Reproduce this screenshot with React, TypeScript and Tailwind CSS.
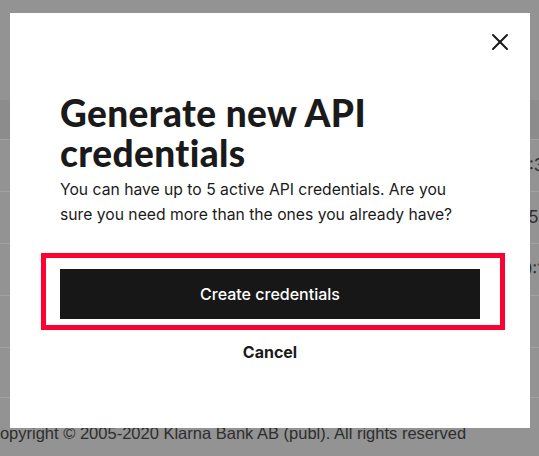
import React from 'react';
import { X } from 'lucide-react';

const rows = [
  { id: 1, value: '14:32:08' },
  { id: 2, value: '125.00' },
  { id: 3, value: '09:14:51' },
  { id: 4, value: '' },
];

const App: React.FC = () => {
  return (
    <div className="relative w-[539px] h-[456px] overflow-hidden bg-[#939393] font-['Inter',sans-serif] text-[#1a1a1a]">
      {/* Page behind the overlay */}
      <div className="flex flex-col h-full">
        <div className="h-[100px]" />
        <div className="h-[40px] bg-[#8c8c8c] border-b border-[#a2a2a2]" />
        {rows.map((row) => (
          <div key={row.id} className="h-[52px] border-b border-[#a2a2a2] flex items-center pl-[511px] text-[17px] text-[#2e2e2e] whitespace-nowrap">
            {row.value}
          </div>
        ))}
        <div className="h-[49px]" />
        <div className="border-t border-[#a2a2a2] flex-1 pt-[23px] -ml-[12px] text-[16.5px] text-[#2e2e2e] whitespace-nowrap font-['Liberation_Sans',sans-serif]">
          Copyright © 2005-2020 Klarna Bank AB (publ). All rights reserved
        </div>
      </div>

      {/* Modal */}
      <div className="absolute left-[10px] top-[13px] w-[520px] h-[415px] bg-white flex flex-col">
        <div className="flex justify-end pt-[15px] pr-[16px]">
          <X size={28} strokeWidth={1.7} className="text-[#1a1a1a]" />
        </div>
        <div className="px-[50px] mt-[37px]">
          <h2 className="font-['Lato',sans-serif] font-black text-[37px] leading-[40px] tracking-[0.4px]">
            Generate new API credentials
          </h2>
          <p className="mt-[4px] text-[15.7px] leading-[25px] text-[#1a1a1a]">
            You can have up to 5 active API credentials. Are you sure you need more than the ones you already have?
          </p>
        </div>
        <div className="ml-[31px] mr-[25px] mt-[26px] border-[5px] border-[#ff0033] pt-[11px] pl-[14px] pr-[20px] pb-[6px]">
          <button className="w-full h-[50px] bg-[#171717] text-white text-[16px] font-medium">
            Create credentials
          </button>
        </div>
        <button className="mt-[10px] self-center text-[16px] font-bold text-[#1a1a1a]">Cancel</button>
      </div>
    </div>
  );
};

export default App;
